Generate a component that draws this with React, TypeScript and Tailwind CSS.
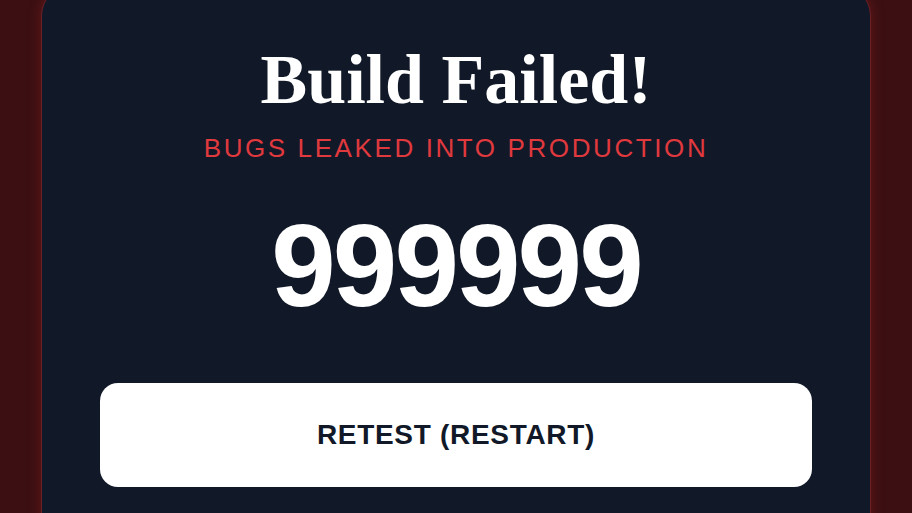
import React from "react";

export default function App() {
  return (
    <div className="h-[513px] w-[912px] overflow-hidden bg-[#3c1013] flex justify-center font-['Liberation_Sans',Arial,sans-serif]">
      <div className="-mt-4 h-[600px] w-[830px] shrink-0 rounded-[32px] border border-[#6b1f26] bg-[#111827] shadow-[0_0_12px_rgba(127,29,29,0.6)] flex flex-col items-center px-[58px] pt-[60px]">
        <h1 className="font-['Liberation_Serif','DejaVu_Serif',serif] text-[70px] leading-none font-bold text-white">
          Build Failed!
        </h1>
        <p className="mt-[20px] text-[26px] leading-none tracking-[0.1em] text-[#e0393e] uppercase">
          Bugs leaked into production
        </p>
        <div className="mt-[47px] text-[116px] leading-none font-bold tracking-tight text-white">
          999999
        </div>
        <button className="mt-[59px] h-[104px] w-full rounded-[18px] bg-white text-[28px] font-bold tracking-wide text-[#111827]">
          RETEST (RESTART)
        </button>
      </div>
    </div>
  );
}
